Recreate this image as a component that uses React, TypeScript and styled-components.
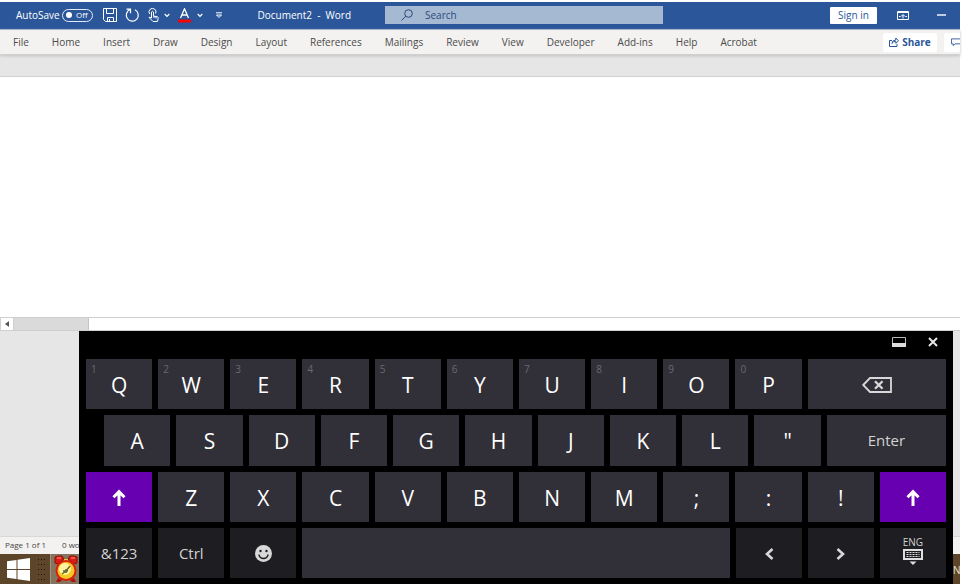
import React from "react";
import styled, { createGlobalStyle } from "styled-components";

const Global = createGlobalStyle`
  *, *::before, *::after { box-sizing: border-box; }
  body { margin: 0; background: #fff; font-family: "Open Sans", "Noto Sans", sans-serif; }
  button, input { font: inherit; }
  button { border: 0; padding: 0; background: none; color: inherit; }
`;

const Page = styled.div`
  position: relative;
  display: flex;
  flex-direction: column;
  min-height: 100vh;
  padding: 2px 2px 0 0;
  overflow: hidden;
`;

const TitleBar = styled.header`
  display: grid;
  grid-template-columns: 2fr 278px 297px;
  align-items: center;
  height: 28px;
  padding-bottom: 1px;
  background: #2b579a;
  border-bottom: 1px solid #9db3d3;
  color: #fff;
  font-size: 10px;
`;

const QuickAccess = styled.div`
  display: flex;
  align-items: center;
  padding-left: 16px;
`;

const AutoSave = styled.label`
  display: flex;
  align-items: center;
  gap: 2px;
  white-space: nowrap;
`;

const Toggle = styled.button`
  display: flex;
  align-items: center;
  justify-content: space-between;
  width: 31px;
  height: 13px;
  padding: 0 4px 0 3px;
  border: 1px solid #e4ebf5;
  border-radius: 7px;
  font-size: 8px;
  line-height: 10px;
  &::before {
    content: "";
    width: 6px;
    height: 6px;
    border-radius: 50%;
    background: #fff;
  }
`;

const QuickButtons = styled.div`
  display: flex;
  align-items: center;
  gap: 4px;
  padding-left: 10px;
`;

const ToolButton = styled.button<{ $w: number }>`
  display: flex;
  justify-content: center;
  width: ${(p) => p.$w}px;
`;

const DocTitle = styled.span`
  flex: 1;
  padding-right: 34px;
  text-align: right;
  white-space: pre;
`;

const SearchBox = styled.label`
  display: flex;
  align-items: center;
  gap: 12px;
  height: 18px;
  padding-left: 16px;
  background: #a6b9d2;
  color: #2b4a7c;
`;

const SearchInput = styled.input`
  flex: 1;
  min-width: 0;
  border: 0;
  padding: 0;
  background: none;
  outline: 0;
  color: inherit;
  &::placeholder { color: #2b4a7c; opacity: 1; }
`;

const WindowTools = styled.div`
  display: flex;
  align-items: center;
  justify-content: flex-end;
`;

const SignIn = styled.button`
  width: 47px;
  height: 17px;
  margin-right: 7px;
  border-radius: 1px;
  background: #fff;
  color: #2b579a;
`;

const Ribbon = styled.nav`
  display: flex;
  align-items: center;
  height: 25px;
  padding-left: 13px;
  background: #f3f2f1;
  border-bottom: 1px solid #d0d0d0;
  box-shadow: 0 1px 3px #c0c0c0;
  color: #4c4b4a;
  font-size: 10px;
  z-index: 1;
`;

const Tabs = styled.div`
  display: flex;
  flex: 1;
  gap: 23px;
`;

const RibbonAction = styled.button<{ $cut?: boolean }>`
  display: flex;
  align-items: center;
  justify-content: ${(p) => (p.$cut ? "flex-start" : "center")};
  gap: 3px;
  width: ${(p) => (p.$cut ? 16 : 54)}px;
  height: 19px;
  margin-left: ${(p) => (p.$cut ? 7 : 0)}px;
  padding-left: ${(p) => (p.$cut ? 7 : 0)}px;
  border-radius: 2px;
  background: #fff;
  color: #2b579a;
  font-weight: 700;
  overflow: hidden;
`;

const RibbonBody = styled.div`
  height: 22px;
  background: #e6e6e6;
  border-bottom: 1px solid #d2d2d2;
`;

const Paper = styled.main`
  flex: 1;
  background: #fff;
`;

const ScrollBar = styled.div`
  display: flex;
  height: 14px;
  border: 1px solid #cfcfcf;
  border-right: 0;
`;

const ScrollArrow = styled.button`
  display: flex;
  align-items: center;
  justify-content: center;
  width: 13px;
  border-right: 1px solid #cfcfcf;
`;

const ScrollThumb = styled.div`
  width: 75px;
  background: #dadada;
  border-right: 1px solid #c6c6c6;
`;

const Backdrop = styled.div`
  height: 205px;
  background: #e6e6e6;
`;

const StatusBar = styled.footer`
  display: flex;
  align-items: center;
  gap: 16px;
  height: 18px;
  padding: 0 0 2px 5px;
  background: #f3f2f1;
  border-top: 1px solid #d8d8d8;
  color: #444;
  font-size: 8px;
`;

const TaskBar = styled.div`
  display: flex;
  align-items: stretch;
  height: 30px;
  background: #5d452a;
  color: #e8e0d6;
  font-size: 10px;
`;

const StartButton = styled.button`
  width: 37px;
  padding: 4px 0 0 7px;
  text-align: left;
`;

const Grip = styled.div`
  width: 8px;
  margin: 2px 5px 2px 0;
  background: radial-gradient(circle, #1f150b 1px, transparent 1px) 0 1px / 3px 5px;
`;

const TaskApp = styled.button`
  width: 30px;
  padding: 1px 0 0 3px;
  background: #83735f;
  border-left: 1px solid #a09382;
  text-align: left;
`;

const Language = styled.span`
  width: 7px;
  margin-left: auto;
  padding-top: 9px;
  overflow: hidden;
`;

const Keyboard = styled.section`
  position: absolute;
  left: 79px;
  right: 9px;
  bottom: 0;
  z-index: 2;
  display: flex;
  flex-direction: column;
  height: 253px;
  padding: 0 7px 6px;
  background: #000;
  color: #fff;
`;

const KeyboardBar = styled.div`
  display: flex;
  align-items: center;
  justify-content: flex-end;
  gap: 22px;
  height: 28px;
  padding: 0 8px 6px 0;
`;

const BarButton = styled.button`
  display: flex;
`;

const KeyRows = styled.div`
  display: grid;
  flex: 1;
  grid-template-rows: repeat(4, 1fr);
  gap: 6px;
`;

const KeyRow = styled.div<{ $indent?: boolean }>`
  display: grid;
  grid-template-columns: ${(p) => (p.$indent ? "repeat(10, 5fr) 9fr" : "repeat(12, 1fr)")};
  gap: 6px;
  padding-left: ${(p) => (p.$indent ? 18 : 0)}px;
`;

type Tone = "letter" | "dark" | "shift";
const tones: Record<Tone, string> = { letter: "#312f37", dark: "#1e1d21", shift: "#6600b1" };

const Key = styled.button<{ $tone?: Tone; $span?: number; $small?: boolean }>`
  position: relative;
  display: flex;
  flex-direction: column;
  align-items: center;
  justify-content: center;
  grid-column: span ${(p) => p.$span ?? 1};
  min-width: 0;
  padding-top: ${(p) => (p.$small ? 0 : 2)}px;
  background: ${(p) => tones[p.$tone ?? "letter"]};
  color: ${(p) => (p.$small ? "#d2d2d2" : "#fff")};
  font-size: ${(p) => (p.$small ? 15 : 21)}px;
  line-height: 24px;
`;

const LanguageKey = styled(Key)`
  padding-bottom: 5px;
`;

const Digit = styled.span`
  position: absolute;
  top: 4px;
  left: 5px;
  color: #6b6a70;
  font-size: 10px;
  line-height: 12px;
`;

const KeyCaption = styled.span`
  font-size: 10px;
  line-height: 12px;
`;

const Caret = () => (
  <svg width="6" height="5" viewBox="0 0 6 5" fill="none" stroke="#fff" strokeWidth="1.2"><path d="M.7 1 3 3.3 5.3 1" /></svg>
);

const UpArrow = () => (
  <svg width="14" height="18" viewBox="0 0 14 18" fill="none" stroke="#fff" strokeWidth="3">
    <path d="M7 17V3M1.5 8.2 7 2.6l5.5 5.6" />
  </svg>
);

const AlarmClock = () => (
  <svg width="24" height="28" viewBox="0 0 24 28">
    <path d="M4 23 2 27h4l2-2M20 23l2 4h-4l-2-2" fill="#b31208" />
    <path d="M1 5V2l3-1h4l2 3-6 5-3-1zM23 5V2l-3-1h-4l-2 3 6 5 3-1z" fill="#d91d12" stroke="#8f1009" />
    <path d="M3 3h4M17 3h4" stroke="#ff9c8f" />
    <path d="M10 4h4v3h-4z" fill="#e8c23b" />
    <circle cx="12" cy="15.5" r="10.5" fill="#d9200e" />
    <circle cx="12" cy="15.5" r="8.5" fill="#f6c820" />
    <circle cx="11" cy="14" r="6" fill="#fff3a0" />
    <path d="m8 19 4-3 4-5M9 16h5M12 14v4" stroke="#6b6a2c" strokeWidth="1.5" fill="none" />
  </svg>
);

const tabs = ["File", "Home", "Insert", "Draw", "Design", "Layout", "References", "Mailings", "Review", "View", "Developer", "Add-ins", "Help", "Acrobat"];

export default function App() {
  return (
    <>
      <Global />
      <Page>
        <TitleBar>
          <QuickAccess>
            <AutoSave>
              AutoSave
              <Toggle role="switch" aria-checked="false">Off</Toggle>
            </AutoSave>
            <QuickButtons>
              <ToolButton $w={15} aria-label="Save">
                <svg width="14" height="14" viewBox="0 0 14 14" fill="none" stroke="#fff">
                  <path d="M.5.5h13v13h-11l-2-2zM3.5.5v5h7v-5M4.5 13.5v-4h6v4M6.5 11v2" />
                </svg>
              </ToolButton>
              <ToolButton $w={22} aria-label="Redo">
                <svg width="15" height="15" viewBox="0 0 15 15" fill="none" stroke="#fff" strokeWidth="1.2">
                  <path d="M1.5 1.2h4v4M5.3 1.5A6 6 0 1 0 10 1.8" />
                </svg>
              </ToolButton>
              <ToolButton $w={11} aria-label="Touch mode">
                <svg width="11" height="15" viewBox="0 0 11 15" fill="none" stroke="#fff">
                  <path d="M1.7 6A3.5 3.5 0 1 1 7.6 5.5M3.5 10V4q1-1.5 2 0v4l4 .8q1 .4.7 1.500l-.8 3.200H5L1 9.5q.8-1 2.500.5M6 10V8M8 10.500V9" />
                </svg>
              </ToolButton>
              <ToolButton $w={9} aria-label="Touch mode options"><Caret /></ToolButton>
              <ToolButton $w={17} aria-label="Font color">
                <svg width="13" height="15" viewBox="0 0 13 15" fill="none" stroke="#fff">
                  <path d="M2.5 10 6.5.8l4 9.2M4 7h5" strokeWidth="1.3" />
                  <path d="M0 13h13" stroke="#f00" strokeWidth="3" />
                </svg>
              </ToolButton>
              <ToolButton $w={7} aria-label="Font color options"><Caret /></ToolButton>
              <ToolButton $w={22} aria-label="Customize toolbar">
                <svg width="8" height="7" viewBox="0 0 8 7" fill="none" stroke="#fff"><path d="M1 .8h6M1.5 3h5L4 5.5z" /></svg>
              </ToolButton>
            </QuickButtons>
            <DocTitle>{"Document2  -  Word"}</DocTitle>
          </QuickAccess>
          <SearchBox>
            <svg width="12" height="12" viewBox="0 0 12 12" fill="none" stroke="#2b4a7c">
              <circle cx="7.5" cy="4.5" r="3.8" /><path d="M4.8 7.2.5 11.5" />
            </svg>
            <SearchInput placeholder="Search" aria-label="Search" />
          </SearchBox>
          <WindowTools>
            <SignIn>Sign in</SignIn>
            <ToolButton $w={38} aria-label="Ribbon display options">
              <svg width="12" height="9" viewBox="0 0 12 9" fill="none" stroke="#fff">
                <path d="M.5.5h11v8H.5zM0 1.500h12M6 7.500V4M4 5.500l2-2 2 2M2 5.500h1.500M8.500 5.500H10" />
              </svg>
            </ToolButton>
            <ToolButton $w={38} aria-label="Minimize">
              <svg width="9" height="2" viewBox="0 0 9 2"><path d="M0 1h9" stroke="#fff" strokeWidth="1.4" /></svg>
            </ToolButton>
          </WindowTools>
        </TitleBar>

        <Ribbon>
          <Tabs>{tabs.map((t) => <button key={t}>{t}</button>)}</Tabs>
          <RibbonAction>
            <svg width="10" height="10" viewBox="0 0 10 10" fill="none" stroke="#2b579a">
              <path d="M3 3.5H.5v6H8V7M2.8 6.5q.5-3.500 4-3.500V1l2.700 2.800L6.800 6.300v-2q-2.500 0-4 2.200z" />
            </svg>
            Share
          </RibbonAction>
          <RibbonAction $cut aria-label="Comments">
            <svg width="10" height="9" viewBox="0 0 10 9" fill="none" stroke="#2b579a"><path d="M.5.5H11V6H4.500L2.500 8V6h-2z" /></svg>
          </RibbonAction>
        </Ribbon>
        <RibbonBody />
        <Paper />
        <ScrollBar>
          <ScrollArrow aria-label="Scroll left">
            <svg width="4" height="6" viewBox="0 0 4 6"><path d="M4 0v6L0 3z" fill="#555" /></svg>
          </ScrollArrow>
          <ScrollThumb />
        </ScrollBar>
        <Backdrop />
        <StatusBar><span>Page 1 of 1</span><span>0 words</span></StatusBar>
        <TaskBar>
          <StartButton aria-label="Start">
            <svg width="23" height="23" viewBox="0 0 23 23" fill="#fff">
              <path d="M0 3.2 9.5 2v9H0zM10.5 1.800 23 0v11H10.500zM0 12h9.500v9L0 19.800zM10.500 12H23v11l-12.500-1.800z" />
            </svg>
          </StartButton>
          <Grip />
          <TaskApp aria-label="Alarm clock"><AlarmClock /></TaskApp>
          <Language>N</Language>
        </TaskBar>

        <Keyboard aria-label="On-screen keyboard">
          <KeyboardBar>
            <BarButton aria-label="Dock keyboard">
              <svg width="14" height="10" viewBox="0 0 14 10"><path d="M.5.5h13v9H.5z" fill="none" stroke="#bbb" /><path d="M0 6h14v4H0z" fill="#ddd" /></svg>
            </BarButton>
            <BarButton aria-label="Close keyboard">
              <svg width="10" height="10" viewBox="0 0 10 10" stroke="#e6e6e6" strokeWidth="2"><path d="m1 1 8 8M9 1 1 9" /></svg>
            </BarButton>
          </KeyboardBar>
          <KeyRows>
            <KeyRow>
              {"QWERTYUIOP".split("").map((c, i) => (
                <Key key={c}><Digit>{(i + 1) % 10}</Digit>{c}</Key>
              ))}
              <Key $span={2} aria-label="Backspace">
                <svg width="30" height="16" viewBox="0 0 30 16" fill="none" stroke="#d8d8d8" strokeWidth="1.8">
                  <path d="M1.200 8 8 1h21v14H8z" /><path d="m13 4.200 7.500 7.600M20.500 4.200 13 11.800" strokeWidth="2.300" />
                </svg>
              </Key>
            </KeyRow>
            <KeyRow $indent>
              {"ASDFGHJKL\"".split("").map((c) => <Key key={c}>{c}</Key>)}
              <Key $small>Enter</Key>
            </KeyRow>
            <KeyRow>
              <Key $tone="shift" aria-label="Left shift"><UpArrow /></Key>
              {"ZXCVBNM;:!".split("").map((c) => <Key key={c}>{c}</Key>)}
              <Key $tone="shift" aria-label="Right shift"><UpArrow /></Key>
            </KeyRow>
            <KeyRow>
              <Key $tone="dark" $small>&amp;123</Key>
              <Key $tone="dark" $small>Ctrl</Key>
              <Key $tone="dark" aria-label="Emoji">
                <svg width="17" height="17" viewBox="0 0 17 17">
                  <circle cx="8.5" cy="8.5" r="8.5" fill="#d8d8d8" />
                  <circle cx="5.5" cy="6" r="1.2" fill="#1e1d21" /><circle cx="11.5" cy="6" r="1.2" fill="#1e1d21" />
                  <path d="M3.8 9.500q1 4 4.700 4t4.700-4" fill="none" stroke="#1e1d21" strokeWidth="1.3" />
                </svg>
              </Key>
              <Key $span={6} aria-label="Space" />
              <Key $tone="dark" aria-label="Left">
                <svg width="10" height="12" viewBox="0 0 10 12" fill="none" stroke="#d8d8d8" strokeWidth="2.6"><path d="M8.500 1 3 6l5.500 5" /></svg>
              </Key>
              <Key $tone="dark" aria-label="Right">
                <svg width="10" height="12" viewBox="0 0 10 12" fill="none" stroke="#d8d8d8" strokeWidth="2.6"><path d="M1.500 1 7 6l-5.500 5" /></svg>
              </Key>
              <LanguageKey $tone="dark" $small>
                <KeyCaption>ENG</KeyCaption>
                <svg width="20" height="17" viewBox="0 0 20 17" fill="none" stroke="#dedede">
                  <path d="M1 2h18v9H1z" strokeWidth="2" />
                  <path d="M3.500 4.500h13M3.500 6.500h13M3.500 8.500h13" strokeDasharray="2 1" />
                  <path d="M6.500 13.500h7L10 17z" fill="#dedede" stroke="none" />
                </svg>
              </LanguageKey>
            </KeyRow>
          </KeyRows>
        </Keyboard>
      </Page>
    </>
  );
}
